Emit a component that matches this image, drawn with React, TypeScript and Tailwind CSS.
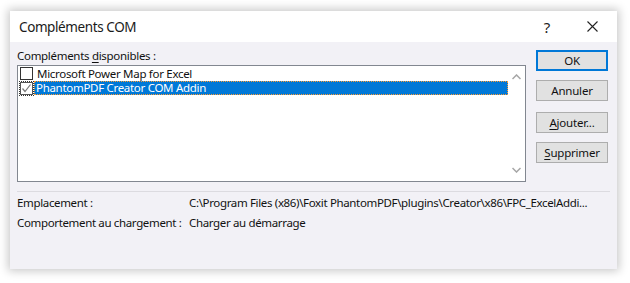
import React from "react";

const font = { fontFamily: '"Segoe UI", "Noto Sans", "Open Sans", sans-serif' };

function Btn({ children, primary }: { children: React.ReactNode; primary?: boolean }) {
  return (
    <div
      className={
        "w-[72px] h-[21px] flex items-center justify-center bg-[#e1e1e1] text-[11.5px] tracking-[-0.2px] text-[#111] leading-none " +
        (primary ? "border-2 border-[#0078d7]" : "border border-[#adadad]")
      }
    >
      {children}
    </div>
  );
}

export default function App() {
  return (
    <div className="w-[630px] h-[283px] bg-white pl-[10px] pt-[11px]" style={font}>
      <div className="w-[607px] h-[258px] flex flex-col bg-[#f2f1f6] shadow-[0_0_9px_2px_rgba(0,0,0,0.22)]">
        {/* title bar */}
        <div className="h-[31px] bg-white flex items-center pl-[9px] shrink-0">
          <div className="text-[13.5px] tracking-[-0.4px] text-[#1a1a1a] flex-1 mt-[1px]">Compléments COM</div>
          <div className="text-[15px] text-[#222] w-[20px] text-center mr-[30px] mt-[1px]">?</div>
          <svg width="11" height="11" viewBox="0 0 11 11" className="mr-[19px]">
            <path d="M0.5 0.5 L10.5 10.5 M10.5 0.5 L0.5 10.5" stroke="#222" strokeWidth="1.1" />
          </svg>
        </div>
        {/* body */}
        <div className="flex flex-col pl-[7px] pr-[7px]">
          <div className="flex">
            <div className="w-[509px] flex flex-col pt-[5px]">
              <div className="h-[16px] text-[11.5px] tracking-[-0.3px] leading-[16px] text-[#111] mt-[1px]">
                Compléments <span className="underline underline-offset-2">d</span>isponibles :
              </div>
              <div className="mt-[1px] h-[117px] border border-[#828790] bg-white flex">
                <div className="flex-1 pt-[1px] pl-[2px] flex flex-col">
                  <div className="h-[13px] flex items-center">
                    <div className="w-[13px] h-[13px] border border-[#333] bg-white shrink-0" />
                    <div className="ml-[3px] text-[11.5px] tracking-[-0.3px] leading-[13px] text-[#111] px-[1px]">
                      Microsoft Power Map for Excel
                    </div>
                  </div>
                  <div className="h-[14px] mt-[1px] flex items-center">
                    <div className="w-[13px] h-[13px] border border-[#555] bg-white shrink-0 relative outline outline-1 outline-dotted outline-[#333]">
                      <svg width="11" height="11" viewBox="0 0 11 11" className="absolute left-0 top-0">
                        <path d="M1.5 5.5 L4 8.5 L9.5 1.5" stroke="#777" strokeWidth="1.2" fill="none" />
                      </svg>
                    </div>
                    <div className="ml-[1px] flex-1 h-[14px] bg-[#0078d7] border border-dotted border-[#ff9c30] text-[11.5px] tracking-[-0.3px] leading-[12px] text-white pl-[1px]">
                      PhantomPDF Creator COM Addin
                    </div>
                  </div>
                </div>
                <div className="w-[17px] flex flex-col items-center justify-between py-[8px] bg-white">
                  <svg width="9" height="6" viewBox="0 0 9 6">
                    <path d="M0.5 5 L4.5 1 L8.5 5" stroke="#a6a6a6" strokeWidth="1.5" fill="none" />
                  </svg>
                  <svg width="9" height="6" viewBox="0 0 9 6">
                    <path d="M0.5 1 L4.5 5 L8.5 1" stroke="#a6a6a6" strokeWidth="1.5" fill="none" />
                  </svg>
                </div>
              </div>
            </div>
            <div className="ml-[10px] flex flex-col pt-[8px]">
              <Btn primary>OK</Btn>
              <div className="mt-[9px]">
                <Btn>Annuler</Btn>
              </div>
              <div className="mt-[11px]">
                <Btn>
                  <span>
                    <span className="underline underline-offset-2">A</span>jouter...
                  </span>
                </Btn>
              </div>
              <div className="mt-[9px]">
                <Btn>
                  <span>
                    <span className="underline underline-offset-2">S</span>upprimer
                  </span>
                </Btn>
              </div>
            </div>
          </div>
          <div className="mt-[9px] h-px bg-[#dcdbe0] w-[593px]" />
          <div className="mt-[1px] flex flex-col text-[11.5px] tracking-[-0.35px] text-[#111]">
            <div className="h-[20px] flex items-center">
              <div className="w-[172px] shrink-0 whitespace-nowrap">Emplacement :</div>
              <div className="whitespace-nowrap">
                C:\Program Files (x86)\Foxit PhantomPDF\plugins\Creator\x86\FPC_ExcelAddi...
              </div>
            </div>
            <div className="h-[20px] flex items-center">
              <div className="w-[172px] shrink-0 whitespace-nowrap">Comportement au chargement :</div>
              <div className="whitespace-nowrap">Charger au démarrage</div>
            </div>
          </div>
        </div>
      </div>
    </div>
  );
}
